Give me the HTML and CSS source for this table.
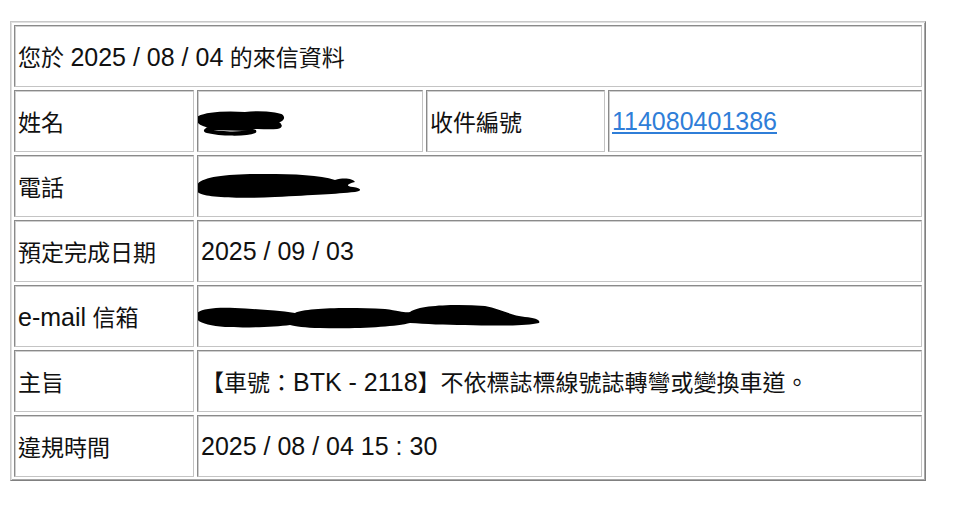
FILE: index.html
```html
<!DOCTYPE html>
<html lang="zh-Hant">
<head>
<meta charset="utf-8">
<title>來信資料</title>
<link rel="stylesheet" href="styles.css">
</head>
<body>
<table class="info">
  <colgroup>
    <col class="c1"><col class="c2"><col class="c3"><col class="c4">
  </colgroup>
  <tr><td colspan="4">您於 <span class="lat">2025 / 08 / 04</span> 的來信資料</td></tr>
  <tr>
    <td>姓名</td>
    <td><svg class="blot" width="92" height="32" viewBox="0 0 92 32"><path d="M2 13 C10 8 30 7 50 8 C65 6 80 8 86 10 C90 12 88 16 82 17 C86 19 88 22 82 23 C70 24 55 22 40 23 C55 24 62 25 60 27 C50 31 25 30 12 27 C8 26 10 24 16 22 C8 21 2 18 2 13 Z M14 25 C25 28 45 28 55 26" fill="#000" stroke="#000" stroke-width="2"/></svg></td>
    <td>收件編號</td>
    <td><a class="lat" href="#">114080401386</a></td>
  </tr>
  <tr>
    <td>電話</td>
    <td colspan="3"><svg class="blot" width="170" height="30" viewBox="0 0 170 30"><path d="M2 14 C6 6 30 3 70 3 C100 3 125 4 140 9 C150 6 158 8 160 11 C152 13 150 15 158 16 C166 17 168 20 160 21 C140 23 120 24 80 26 C40 28 10 26 4 22 C1 20 1 17 2 14 Z" fill="#000"/></svg></td>
  </tr>
  <tr>
    <td>預定完成日期</td>
    <td colspan="3"><span class="lat">2025 / 09 / 03</span></td>
  </tr>
  <tr>
    <td><span class="lat">e-mail</span> 信箱</td>
    <td colspan="3"><svg class="blot" width="348" height="30" viewBox="0 0 348 30"><path d="M2 12 C6 8 20 6 40 7 C60 8 80 9 100 12 C110 7 150 6 190 8 C205 10 210 12 215 11 C225 4 260 3 290 5 C305 8 315 14 330 16 C340 17 346 19 344 22 C330 25 300 25 270 24 C250 24 230 23 215 22 C200 26 160 28 125 27 C110 27 100 25 95 24 C80 26 50 27 30 26 C15 25 4 22 2 18 Z" fill="#000"/></svg></td>
  </tr>
  <tr>
    <td>主旨</td>
    <td colspan="3">【車號：<span class="lat">BTK - 2118</span>】不依標誌標線號誌轉彎或變換車道。</td>
  </tr>
  <tr>
    <td>違規時間</td>
    <td colspan="3"><span class="lat">2025 / 08 / 04 15 : 30</span></td>
  </tr>
</table>
</body>
</html>
```

FILE: styles.css
```css
html, body {
  margin: 0;
  padding: 0;
  background: #fff;
}
body {
  padding: 21px 0 0 10px;
  font-family: "Liberation Sans", "Noto Sans CJK TC", sans-serif;
  font-size: 23px;
  color: #111;
}
.info {
  table-layout: fixed;
  width: 916px;
  border-collapse: separate;
  border-spacing: 3px;
  border: 1px solid;
  border-color: #c8c8c8 #808080 #808080 #c8c8c8;
  box-shadow: inset 1px 1px 0 #e0e0e0, inset -1px -1px 0 #a8a8a8;
}
.c1 { width: 180px; }
.c2 { width: 226px; }
.c3 { width: 179px; }
.c4 { width: 314px; }
.info td {
  box-sizing: border-box;
  height: 62px;
  padding: 0 3px;
  border: 1px solid;
  border-color: #8a8a8a #c4c4c4 #c4c4c4 #8a8a8a;
  box-shadow: inset 1px 1px 0 #cfcfcf;
  vertical-align: middle;
  white-space: nowrap;
  overflow: hidden;
}
.lat {
  font-size: 25px;
}
.info a {
  color: #2f7ed8;
  text-decoration: underline;
}
.blot {
  display: block;
  margin-left: -6px;
}
```
